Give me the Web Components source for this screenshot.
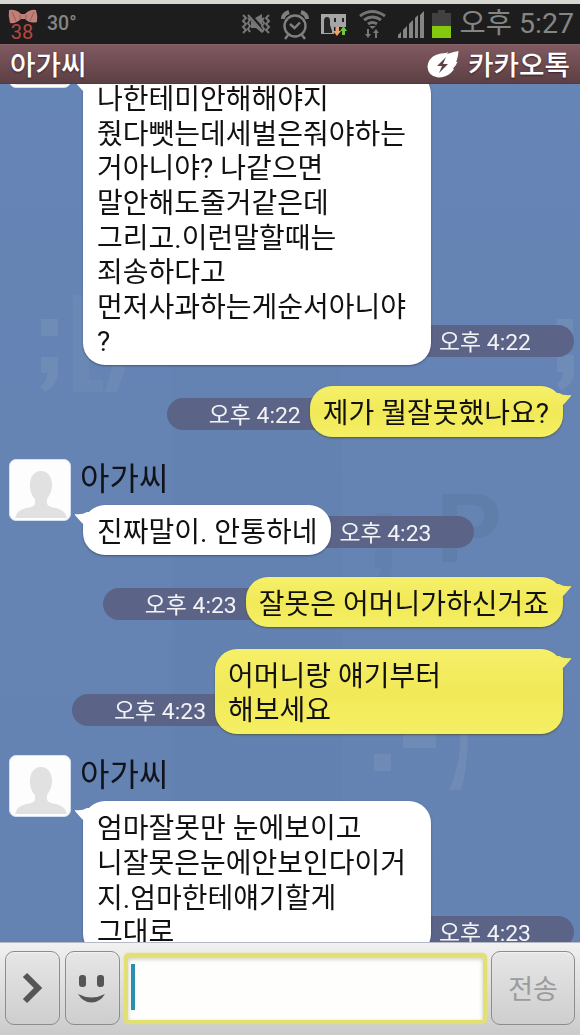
<!DOCTYPE html>
<html lang="ko">
<head>
<meta charset="utf-8">
<title>카카오톡</title>
<style>
    html, body {
        margin: 0;
        padding: 0;
        height: 100%;
        overflow: hidden;
    }
    body {
        font-family: Roboto, "Noto Sans CJK KR", sans-serif;
    }
</style>
</head>
<body>
<chat-app>
    <status-bar slot="status" badge="38" temp="30°" clock="오후 5:27"></status-bar>
    <chat-header slot="header">아가씨<span slot="brand">카카오톡</span></chat-header>
    <chat-message name="아가씨" time="오후 4:22" wide>나한테미안해해야지<br>줬다뺏는데세벌은줘야하는<br>거아니야? 나같으면<br>말안해도줄거같은데<br>그리고.이런말할때는<br>죄송하다고<br>먼저사과하는게순서아니야<br>?</chat-message>
    <chat-message mine time="오후 4:22">제가 뭘잘못했나요?</chat-message>
    <chat-message name="아가씨" time="오후 4:23">진짜말이. 안통하네</chat-message>
    <chat-message mine time="오후 4:23">잘못은 어머니가하신거죠</chat-message>
    <chat-message mine time="오후 4:23" wide>어머니랑 얘기부터<br>해보세요</chat-message>
    <chat-message name="아가씨" time="오후 4:23" wide>엄마잘못만 눈에보이고<br>니잘못은눈에안보인다이거<br>지.엄마한테얘기할게<br>그대로</chat-message>
    <chat-input slot="input">전송</chat-input>
</chat-app>

<script>
class ChatApp extends HTMLElement {

    constructor() {
        super();
        this.attachShadow({mode: "open"}).innerHTML = `
        <style>
            :host {
                display: flex;
                flex-direction: column;
                width: 580px;
                height: 1035px;
                overflow: hidden;
                background: #d6d7d0;
            }
            .chat {
                flex: 1;
                min-height: 0;
                overflow: hidden;
                position: relative;
                background: linear-gradient(#6585b6, #6583b3 50%, #6482b2);
            }
            .wallpaper {
                position: absolute;
                left: 0;
                top: 0;
            }
            .list {
                position: relative;
                display: flex;
                flex-direction: column;
                gap: 21.5px;
                /* scrolled down so the first message is cut off */
                margin-top: -57.8px;
            }
        </style>
        <slot name="status"></slot>
        <slot name="header"></slot>
        <div class="chat">
            <wall-paper class="wallpaper"></wall-paper>
            <div class="list"><slot></slot></div>
        </div>
        <slot name="input"></slot>`;
    }
}

class WallPaper extends HTMLElement {

    constructor() {
        super();
        this.attachShadow({mode: "open"}).innerHTML = `
        <style>
            :host { display: block; }
            svg { display: block; }
        </style>
        <svg width="580" height="858" viewBox="0 84 580 858">
            <rect x="172" y="84" width="170" height="858" fill="#5f7fa8" opacity=".15"/>
            <g fill="#7a94b8" opacity=".5">
                <rect x="41" y="319" width="17" height="17"/>
                <path d="M41 357h17v15q0 14-14 20l-4-6q7-4 7-13h-6z"/>
                <path d="M73 295h16v85h14v12H73z" opacity=".6"/>
                <path d="M114 295h14q9 48-11 97h-12q17-49 9-97z" opacity=".7"/>
                <path d="M557 319h16v17h-16z"/>
                <path d="M557 355h17v17q0 13-13 18l-4-6q6-4 6-12h-6z"/>
                <rect x="374" y="754" width="17" height="17"/>
                <rect x="403" y="732" width="33" height="16"/>
                <path d="M449 790q17-38 8-75h10q3 44-6 75z"/>
            </g>
            <g fill="#587395" opacity=".28">
                <path d="M375 513h17v17h-17zM375 549h17v17q0 14-13 20l-5-6q7-4 7-12h-6z" opacity=".6"/>
                <text x="436" y="562" font-family="Liberation Sans" font-weight="700" font-size="99">P</text>
            </g>
        </svg>`;
    }
}

class StatusBar extends HTMLElement {

    constructor() {
        super();
        this.attachShadow({mode: "open"});
    }

    connectedCallback() {
        this.shadowRoot.innerHTML = `
        <style>
            :host {
                display: flex;
                align-items: center;
                height: 40px;
                margin-top: 4px;
                padding: 0 6px 0 7px;
                background: #1d1d1d;
                color: #858585;
                flex: none;
            }
            svg { display: block; flex: none; }
            .badge {
                display: flex;
                flex-direction: column;
                align-items: center;
                width: 30px;
                font-size: 20px;
                line-height: 16px;
                color: #b8473f;
            }
            .badge svg { margin-left: 1px; }
            .temp {
                margin-left: 10px;
                font-size: 19.5px;
                font-weight: 500;
                line-height: 42px;
            }
            .icons {
                display: flex;
                align-items: center;
                margin-left: auto;
            }
            .clock {
                margin-left: 8px;
                font-size: 28.5px;
                line-height: 42px;
                white-space: nowrap;
            }
        </style>
        <div class="badge">
            <svg width="30" height="15" viewBox="0 0 30 15">
                <path d="M1 1q7-1 12 4h4q5-5 11-4 2 6 1 12-7 2-12-3h-4q-5 5-11 4Q0 7 1 1z" fill="#c07f79"/>
                <path d="M4 3l4 9M26 3l-4 9M12 6v4M18 6v4" stroke="#97605c" fill="none"/>
            </svg>
            ${this.getAttribute("badge")}
        </div>
        <div class="temp">${this.getAttribute("temp")}</div>
        <div class="icons">
            <svg width="212" height="40" viewBox="240 4 212 40">
                <g fill="none" stroke="#777" stroke-width="2">
                    <path d="M243 15l3 3-3 3 3 3-3 3 3 3-3 3M248 18l2 2-2 3 2 3-2 3 2 3M269 15l-3 3 3 3-3 3 3 3-3 3 3 3M264 18l-2 2 2 3-2 3 2 3-2 3"/>
                    <path d="M248 15l15 17"/>
                </g>
                <path d="M251 20l11 11v2l-6-5h-5zM255 18l7-4v12z" fill="#777"/>
                <g fill="none" stroke="#808080" stroke-width="2.4">
                    <circle cx="295" cy="26" r="10.5"/>
                    <path d="M290 24l4.500 4 5.500-5.500M288 35l-3 4M302 35l3 4"/>
                    <path d="M283 19q0-5 6-7M307 19q0-5-6-7" stroke-width="4"/>
                </g>
                <path d="M321 14h25v13h-12v7h-13z" fill="#a5a5a5"/>
                <path d="M324 30v-9q0-4 3-4t3 4v4l2 6v2h-8z" fill="#262626"/>
                <path d="M334 18h2v4h-2zM342 18h2v4h-2z" fill="#222"/>
                <path d="M335.500 27h3.500v4h2l-4 5-4-5h2.500z" fill="#f2a06a"/>
                <path d="M342 35h3v-4h2l-3.500-5-3.500 5h2z" fill="#77c44a"/>
                <g fill="none" stroke="#747474" stroke-width="3">
                    <path d="M360 16q12-9 25 0M364 20q8.500-6 17 0M368 24q4.500-3 9 0"/>
                </g>
                <path d="M369 26h7l-3.500 3zM367 29h2v5h2l-3 4-3-4h2zM375 38h2v-5h2l-3-4-3 4h2z" fill="#777"/>
                <path d="M398 38v-3l3-3v6zM403 38v-8l4-4v12zM409 38v-14l4-4v18zM415 38v-20l3-3v23zM420 38v-23l4-4v27z" fill="#858585"/>
                <path d="M438 10h7v3h6v13h-19v-13h6z" fill="#414141"/>
                <path d="M432 26h19v12h-19z" fill="#85c90f"/>
            </svg>
        </div>
        <div class="clock">${this.getAttribute("clock")}</div>`;
    }
}

class ChatHeader extends HTMLElement {

    constructor() {
        super();
        this.attachShadow({mode: "open"}).innerHTML = `
        <style>
            :host {
                display: flex;
                justify-content: space-between;
                align-items: center;
                box-sizing: border-box;
                height: 40px;
                padding: 3px 10px 0 10px;
                flex: none;
                background: linear-gradient(#805a60, #724f55 40%, #5c4044);
                border-top: 1px solid #86646a;
                border-bottom: 1px solid #503b3e;
                color: #fff;
                font-size: 27.7px;
                font-weight: 500;
                line-height: 38px;
                text-shadow: 0 1px 2px rgba(40, 15, 20, .7);
                white-space: nowrap;
            }
            .brand {
                display: flex;
                align-items: center;
                gap: 9px;
            }
            svg { display: block; margin-top: -3px; }
        </style>
        <div><slot></slot></div>
        <div class="brand">
            <svg width="32" height="27" viewBox="0 0 32 27">
                <path d="M31.500 0Q31 7 29 11l1.500-.5q-1 4-4.500 7l1 .5q-3 5-8 7-4 1.500-8 1.500Q1 25 .5 16 1 5 14 2.500l5-.5 2-1-1 2q6-2 11.500-3z" fill="#fff"/>
                <path d="M19 6l-9 9h5l-3 7 9-9h-5z" fill="#5f4247"/>
            </svg>
            <slot name="brand"></slot>
        </div>`;
    }
}

class ChatMessage extends HTMLElement {

    constructor() {
        super();
        this.attachShadow({mode: "open"});
    }

    connectedCallback() {
        const mine = this.hasAttribute("mine");
        const time = this.getAttribute("time");
        this.shadowRoot.innerHTML = `
        <style>
            :host {
                display: flex;
                padding-left: 9px;
            }
            :host([mine]) {
                justify-content: flex-end;
                padding: 0 17px 0 0;
            }
            user-avatar {
                margin-right: 9px;
            }
            .name {
                height: 46px;
                font-size: 32px;
                line-height: 40px;
                color: #10131a;
                white-space: nowrap;
            }
            .row {
                display: flex;
                align-items: flex-end;
                margin-left: 3px;
            }
            :host([mine]) .row {
                flex-direction: row-reverse;
                margin: 0;
            }
            .bubble {
                position: relative;
                z-index: 1;
                box-sizing: border-box;
                padding: 11px 14px 5px;
                border-radius: 22px;
                background: #fff;
                box-shadow: 0 1px 2px rgba(40, 55, 85, .6);
                color: #111;
                font-size: 28px;
                line-height: 34.6px;
                white-space: nowrap;
            }
            :host([mine]) .bubble {
                background: linear-gradient(#f6f06a, #f1e957 50%, #f5ef64);
                box-shadow: 0 1px 2px rgba(75, 80, 40, .8);
                padding: 11px 14px 5px 13px;
            }
            :host([wide]) .bubble {
                width: 348px;
            }
            .tail {
                position: absolute;
                top: 7px;
                left: -8px;
                display: block;
            }
            :host([mine]) .tail {
                left: auto;
                right: -8px;
                transform: scaleX(-1);
            }
            .time {
                box-sizing: border-box;
                width: 165px;
                height: 32px;
                margin: 0 0 7.500px -22px;
                padding-left: 30px;
                border-radius: 16px;
                background: #5b6486;
                color: #f2f3f6;
                font-size: 22.9px;
                line-height: 35px;
                white-space: nowrap;
            }
            :host([mine]) .time {
                margin: 0 -22px 7.500px 0;
                padding: 0 31px 0 0;
                text-align: right;
            }
        </style>
        ${mine ? "" : "<user-avatar></user-avatar>"}
        <div>
            ${mine ? "" : `<div class="name">${this.getAttribute("name")}</div>`}
            <div class="row">
                <div class="bubble">
                    <svg class="tail" width="18" height="14" viewBox="0 0 18 14">
                        <path d="M0 2q7 1 12-2h5L9 13Q5 9 0 3z" fill="${mine ? "#f4ed63" : "#fff"}"/>
                    </svg>
                    <slot></slot>
                </div>
                <div class="time">${time}</div>
            </div>
        </div>`;
    }
}

class UserAvatar extends HTMLElement {

    constructor() {
        super();
        this.attachShadow({mode: "open"}).innerHTML = `
        <style>
            :host {
                display: block;
                flex: none;
                box-sizing: border-box;
                width: 62px;
                height: 62px;
                border: 1px solid #d5e0ef;
                border-radius: 7px;
                background: #fdfdfd;
                overflow: hidden;
            }
            svg { display: block; }
        </style>
        <svg width="60" height="60" viewBox="0 0 60 60">
            <path d="M31 11c7 0 11 6 11 14 0 7-3 11-5 14v5q2 3 9 4 9 2 11 10H5q2-8 11-10 8-1 9-4v-5c-3-3-5-7-5-14 0-8 4-14 11-14z" fill="#e1e1e1"/>
        </svg>`;
    }
}

class ChatInput extends HTMLElement {

    constructor() {
        super();
        this.attachShadow({mode: "open"}).innerHTML = `
        <style>
            :host {
                display: flex;
                align-items: flex-start;
                box-sizing: border-box;
                height: 93px;
                padding: 8px 5px 0;
                flex: none;
                border-top: 1px solid #b4b9c4;
                background: linear-gradient(#f1f1f1, #dededf 50%, #cbcbcc);
            }
            .btn {
                display: flex;
                align-items: center;
                justify-content: center;
                box-sizing: border-box;
                width: 55px;
                height: 74px;
                margin-right: 4.500px;
                border: 1px solid #8c8c8c;
                border-radius: 9px;
                background: linear-gradient(#e6e6e6, #dadada 50%, #cecece);
                box-shadow: inset 0 1px 1px #f3f3f3;
            }
            .field {
                flex: 1;
                box-sizing: border-box;
                height: 71px;
                margin: 2px 4px 0 0;
                padding: 7px 3px;
                border: 4px solid #e3e072;
                border-radius: 5px;
                background: #fefefc;
                box-shadow: inset 0 2px 4px #c9c9bb, 0 0 2px #d8d78d;
            }
            .caret {
                width: 4px;
                height: 46px;
                background: #2d8fad;
            }
            .send {
                width: 84px;
                margin: 0;
                padding-top: 4px;
                color: #9b9b9b;
                font-size: 27px;
                line-height: 30px;
            }
        </style>
        <div class="btn">
            <svg width="22" height="32" viewBox="0 0 22 32">
                <path d="M3 3l13 13L3 29" fill="none" stroke="#555" stroke-width="6"/>
            </svg>
        </div>
        <div class="btn">
            <svg width="28" height="32" viewBox="0 0 28 32">
                <rect x="1" y="3" width="7" height="12" rx="3" fill="#555"/>
                <rect x="19" y="3" width="7" height="12" rx="3" fill="#555"/>
                <path d="M0 22q13.500 7 27 0-5 8.500-13.500 8.500T0 22z" fill="#555"/>
            </svg>
        </div>
        <div class="field"><div class="caret"></div></div>
        <div class="btn send"><slot></slot></div>`;
    }
}

customElements.define("wall-paper", WallPaper);
customElements.define("user-avatar", UserAvatar);
customElements.define("status-bar", StatusBar);
customElements.define("chat-header", ChatHeader);
customElements.define("chat-message", ChatMessage);
customElements.define("chat-input", ChatInput);
customElements.define("chat-app", ChatApp);
</script>
</body>
</html>
